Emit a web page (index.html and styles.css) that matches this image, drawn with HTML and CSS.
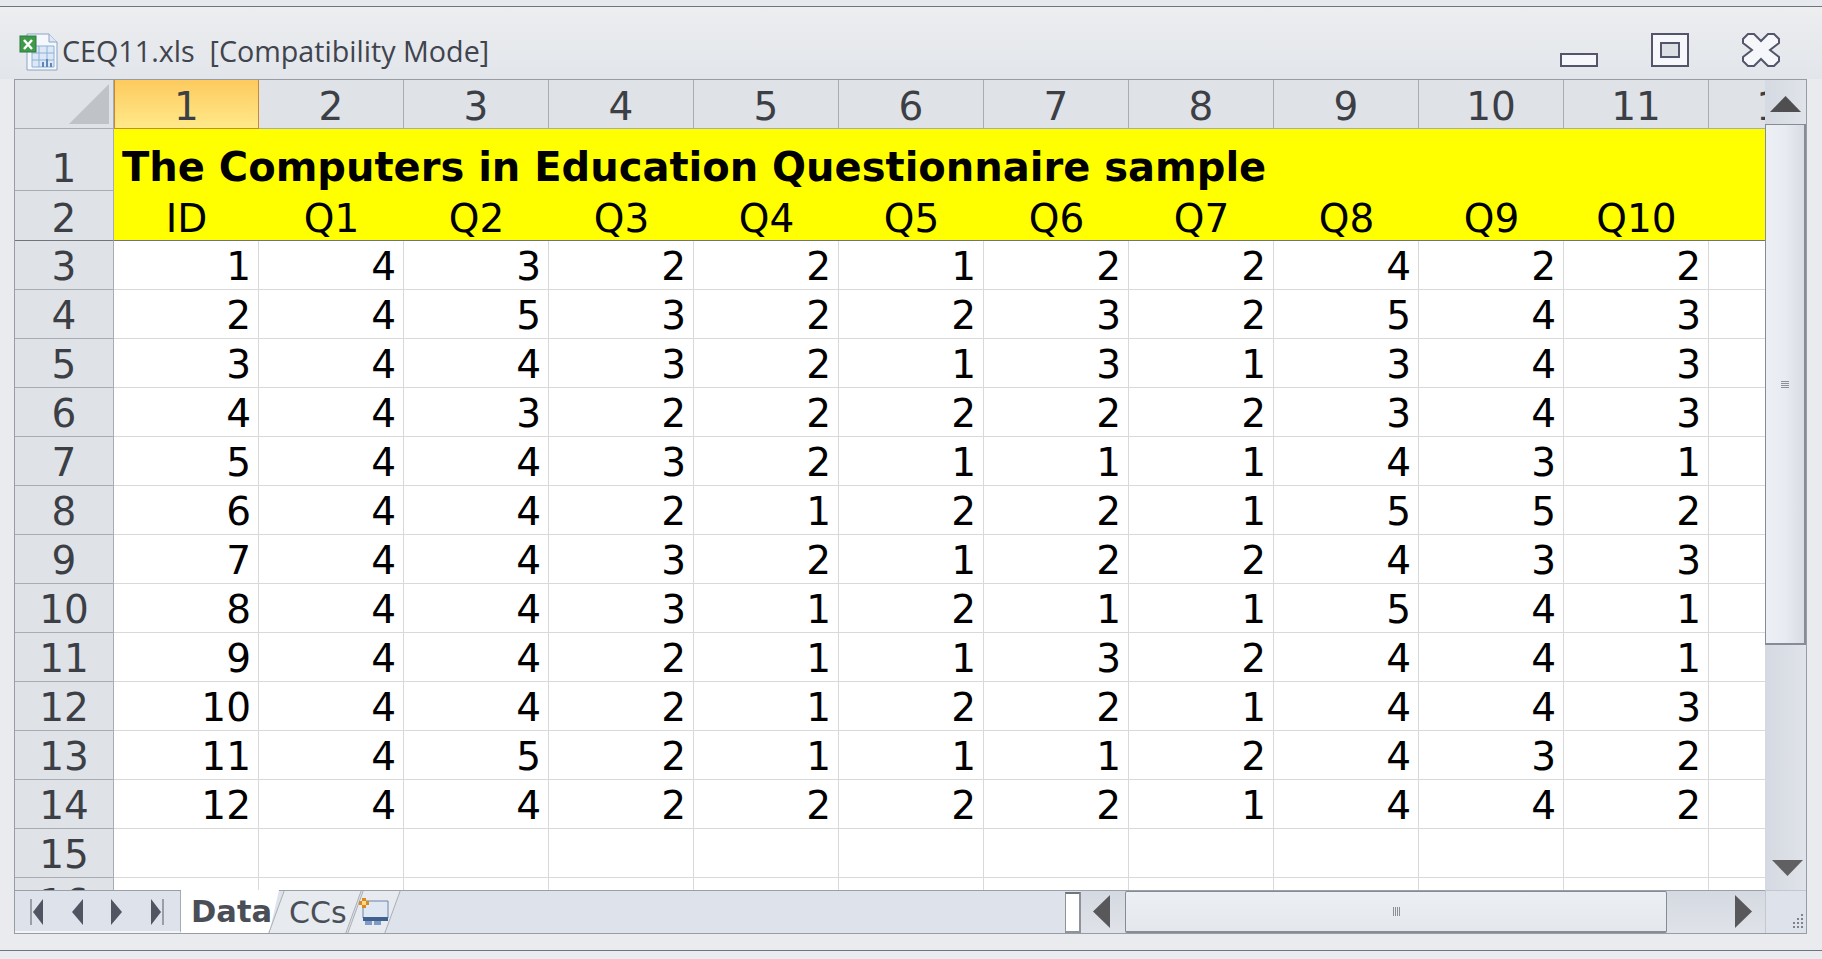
FILE: index.html
```html
<!DOCTYPE html>
<html lang="en">
<head>
    <meta charset="UTF-8">
    <title>CEQ11.xls [Compatibility Mode]</title>
    <link rel="stylesheet" href="styles.css">
</head>
<body>
    <div class="top-strip"></div>
    <div class="title-bar">
        <svg class="file-icon" width="40" height="38" viewBox="0 0 40 38">
            <path d="M8 1H30L38 9V37H8Z" fill="#f4f8fc" stroke="#8aa4c4"/>
            <path d="M30 1V9H38" fill="#dfe8f2" stroke="#8aa4c4"/>
            <path d="M13 13H35V34H13Z" fill="#dce8f6" stroke="#8fb0d6"/>
            <path d="M13 20H35M13 27H35M20 13V34M28 13V34" stroke="#8fb0d6"/>
            <path d="M24 34V29M28 34V26M32 34V30" stroke="#5f86b8" stroke-width="2"/>
            <rect x="1" y="3" width="16" height="16" fill="#3f9a4b" stroke="#2b7a38"/>
            <path d="M5 7L13 16M13 7L5 16" stroke="#fff" stroke-width="2.5"/>
        </svg>
        <span class="file-name">CEQ11.xls&nbsp; [Compatibility Mode]</span>
        <div class="window-buttons">
            <svg class="btn-min" width="38" height="14" viewBox="0 0 38 14"><rect x="1" y="1" width="36" height="12" fill="#f6f7fa" stroke="#53566a" stroke-width="2"/></svg>
            <svg class="btn-max" width="38" height="34" viewBox="0 0 38 34">
                <rect x="1" y="1" width="36" height="32" fill="#f6f7fa" stroke="#53566a" stroke-width="2"/>
                <rect x="10" y="10" width="18" height="14" fill="#dcdfe4" stroke="#53566a" stroke-width="2"/>
            </svg>
            <svg class="btn-close" width="38" height="34" viewBox="0 0 38 34">
                <path d="M6 1H12L19 8L26 1H32L37 6V10L28 17L37 24V28L32 33H26L19 26L12 33H6L1 28V24L10 17L1 10V6Z" fill="#f6f7fa" stroke="#53566a" stroke-width="2"/>
            </svg>
        </div>
    </div>

    <div class="sheet">
        <div class="sheet-main">
            <div class="grid-clip">
                <div class="grid">
                    <div class="corner"></div>
                    <div class="col-head selected">1</div><div class="col-head">2</div><div class="col-head">3</div><div class="col-head">4</div><div class="col-head">5</div><div class="col-head">6</div><div class="col-head">7</div><div class="col-head">8</div><div class="col-head">9</div><div class="col-head">10</div><div class="col-head">11</div><div class="col-head">12</div>

                    <div class="row-head row-tall">1</div>
                    <div class="title-cell">The Computers in Education Questionnaire sample</div>

                    <div class="row-head head-last">2</div>
                    <div class="label">ID</div><div class="label">Q1</div><div class="label">Q2</div><div class="label">Q3</div><div class="label">Q4</div><div class="label">Q5</div><div class="label">Q6</div><div class="label">Q7</div><div class="label">Q8</div><div class="label">Q9</div><div class="label">Q10</div><div class="label"></div>

                    <div class="row-head">3</div>
                    <div class="cell">1</div><div class="cell">4</div><div class="cell">3</div><div class="cell">2</div><div class="cell">2</div><div class="cell">1</div><div class="cell">2</div><div class="cell">2</div><div class="cell">4</div><div class="cell">2</div><div class="cell">2</div><div class="cell"></div>
                    <div class="row-head">4</div>
                    <div class="cell">2</div><div class="cell">4</div><div class="cell">5</div><div class="cell">3</div><div class="cell">2</div><div class="cell">2</div><div class="cell">3</div><div class="cell">2</div><div class="cell">5</div><div class="cell">4</div><div class="cell">3</div><div class="cell"></div>
                    <div class="row-head">5</div>
                    <div class="cell">3</div><div class="cell">4</div><div class="cell">4</div><div class="cell">3</div><div class="cell">2</div><div class="cell">1</div><div class="cell">3</div><div class="cell">1</div><div class="cell">3</div><div class="cell">4</div><div class="cell">3</div><div class="cell"></div>
                    <div class="row-head">6</div>
                    <div class="cell">4</div><div class="cell">4</div><div class="cell">3</div><div class="cell">2</div><div class="cell">2</div><div class="cell">2</div><div class="cell">2</div><div class="cell">2</div><div class="cell">3</div><div class="cell">4</div><div class="cell">3</div><div class="cell"></div>
                    <div class="row-head">7</div>
                    <div class="cell">5</div><div class="cell">4</div><div class="cell">4</div><div class="cell">3</div><div class="cell">2</div><div class="cell">1</div><div class="cell">1</div><div class="cell">1</div><div class="cell">4</div><div class="cell">3</div><div class="cell">1</div><div class="cell"></div>
                    <div class="row-head">8</div>
                    <div class="cell">6</div><div class="cell">4</div><div class="cell">4</div><div class="cell">2</div><div class="cell">1</div><div class="cell">2</div><div class="cell">2</div><div class="cell">1</div><div class="cell">5</div><div class="cell">5</div><div class="cell">2</div><div class="cell"></div>
                    <div class="row-head">9</div>
                    <div class="cell">7</div><div class="cell">4</div><div class="cell">4</div><div class="cell">3</div><div class="cell">2</div><div class="cell">1</div><div class="cell">2</div><div class="cell">2</div><div class="cell">4</div><div class="cell">3</div><div class="cell">3</div><div class="cell"></div>
                    <div class="row-head">10</div>
                    <div class="cell">8</div><div class="cell">4</div><div class="cell">4</div><div class="cell">3</div><div class="cell">1</div><div class="cell">2</div><div class="cell">1</div><div class="cell">1</div><div class="cell">5</div><div class="cell">4</div><div class="cell">1</div><div class="cell"></div>
                    <div class="row-head">11</div>
                    <div class="cell">9</div><div class="cell">4</div><div class="cell">4</div><div class="cell">2</div><div class="cell">1</div><div class="cell">1</div><div class="cell">3</div><div class="cell">2</div><div class="cell">4</div><div class="cell">4</div><div class="cell">1</div><div class="cell"></div>
                    <div class="row-head">12</div>
                    <div class="cell">10</div><div class="cell">4</div><div class="cell">4</div><div class="cell">2</div><div class="cell">1</div><div class="cell">2</div><div class="cell">2</div><div class="cell">1</div><div class="cell">4</div><div class="cell">4</div><div class="cell">3</div><div class="cell"></div>
                    <div class="row-head">13</div>
                    <div class="cell">11</div><div class="cell">4</div><div class="cell">5</div><div class="cell">2</div><div class="cell">1</div><div class="cell">1</div><div class="cell">1</div><div class="cell">2</div><div class="cell">4</div><div class="cell">3</div><div class="cell">2</div><div class="cell"></div>
                    <div class="row-head">14</div>
                    <div class="cell">12</div><div class="cell">4</div><div class="cell">4</div><div class="cell">2</div><div class="cell">2</div><div class="cell">2</div><div class="cell">2</div><div class="cell">1</div><div class="cell">4</div><div class="cell">4</div><div class="cell">2</div><div class="cell"></div>
                    <div class="row-head">15</div>
                    <div class="cell"></div><div class="cell"></div><div class="cell"></div><div class="cell"></div><div class="cell"></div><div class="cell"></div><div class="cell"></div><div class="cell"></div><div class="cell"></div><div class="cell"></div><div class="cell"></div><div class="cell"></div>
                    <div class="row-head">16</div>
                    <div class="cell"></div><div class="cell"></div><div class="cell"></div><div class="cell"></div><div class="cell"></div><div class="cell"></div><div class="cell"></div><div class="cell"></div><div class="cell"></div><div class="cell"></div><div class="cell"></div><div class="cell"></div>
                </div>
            </div>
            <div class="vscroll">
                <div class="v-btn">
                    <svg width="31" height="16" viewBox="0 0 31 16"><path d="M15.5 0L31 16H0Z" fill="#4f4f52"/></svg>
                </div>
                <div class="v-thumb"><span class="grip-h"></span></div>
                <div class="v-space"></div>
                <div class="v-btn v-down">
                    <svg width="31" height="16" viewBox="0 0 31 16"><path d="M0 0H31L15.5 16Z" fill="#606063"/></svg>
                </div>
            </div>
        </div>
        <div class="tab-bar">
            <div class="tab-nav">
                <svg width="14" height="26" viewBox="0 0 14 26"><path d="M1 0V26" stroke="#555a66"/><path d="M13 0V26L3 13Z" fill="#505562"/></svg>
                <svg width="11" height="26" viewBox="0 0 11 26"><path d="M11 0V26L0 13Z" fill="#505562"/></svg>
                <svg width="11" height="26" viewBox="0 0 11 26"><path d="M0 0V26L11 13Z" fill="#505562"/></svg>
                <svg width="14" height="26" viewBox="0 0 14 26"><path d="M13 0V26" stroke="#555a66"/><path d="M1 0V26L11 13Z" fill="#505562"/></svg>
            </div>
            <div class="tab tab-active">Data</div>
            <div class="tab tab-other">CCs</div>
            <div class="tab tab-new">
                <svg width="30" height="28" viewBox="0 0 30 28">
                    <path d="M4 3H29V20H4Z" fill="#dfe7f3" stroke="#6c83ac"/>
                    <path d="M4 19H29V23H4Z" fill="#40618f"/>
                    <path d="M6 23H13V27H6ZM15 23H22V27H15Z" fill="#7f9cc6"/>
                    <path d="M3 0H7V3H10V7H7V10H3V7H0V3H3Z" fill="#d98a1f"/>
                    <rect x="3" y="3" width="4" height="4" fill="#fbd88a"/>
                </svg>
            </div>
            <div class="tab-fill"></div>
            <div class="splitter"></div>
            <div class="hscroll">
                <div class="h-btn">
                    <svg width="17" height="33" viewBox="0 0 17 33"><path d="M17 0V33L0 16.5Z" fill="#58585b"/></svg>
                </div>
                <div class="h-thumb"><span class="grip-v"></span></div>
                <div class="h-btn h-right">
                    <svg width="17" height="33" viewBox="0 0 17 33"><path d="M0 0V33L17 16.5Z" fill="#58585b"/></svg>
                </div>
            </div>
            <div class="size-corner">
                <svg width="12" height="16" viewBox="0 0 12 16"><path d="M9 1h2v2H9zM9 5h2v2H9zM5 5h2v2H5zM9 9h2v2H9zM5 9h2v2H5zM1 9h2v2H1zM9 13h2v2H9zM5 13h2v2H5zM1 13h2v2H1z" fill="#7d828c"/></svg>
            </div>
        </div>
    </div>
    <div class="bottom-strip"></div>
</body>
</html>
```
FILE: styles.css
```css
body {
    margin: 0;
    height: 959px;
    overflow: hidden;
    background: #e9ebef;
    font-family: "DejaVu Sans", sans-serif;
    color: #000;
}
.top-strip {
    height: 6px;
    background: #e6e9ed;
    border-bottom: 1px solid #70747c;
}
.title-bar {
    height: 72px;
    padding: 0 42px 0 19px;
    display: flex;
    align-items: flex-end;
    background: linear-gradient(#eceef0, #e2e5ea);
}
.file-icon {
    margin-bottom: 8px;
}
.file-name {
    margin: 0 0 9px 3px;
    font-family: "Open Sans", sans-serif;
    font-size: 28.7px;
    line-height: 38px;
    color: #3f444e;
}
.window-buttons {
    margin-left: auto;
    display: flex;
    align-items: flex-end;
    gap: 53px;
    padding-bottom: 12px;
}
.sheet {
    width: 1791px;
    margin-left: 14px;
    border: 1px solid #979ca5;
    background: #dfe3e9;
}
.sheet-main {
    display: flex;
    height: 811px;
}
.grid-clip {
    width: 1750px;
    overflow: hidden;
    background: #fff;
}
.grid {
    display: grid;
    grid-template-columns: 99px repeat(12, 145px);
    grid-template-rows: 49px 62px 50px repeat(13, 49px);
    font-size: 39px;
}
.corner {
    background: #dfe2e7;
    border-right: 1px solid #a8adb5;
    border-bottom: 1px solid #a8adb5;
    display: flex;
    align-items: center;
    justify-content: flex-end;
    padding-right: 4px;
}
.corner::after {
    content: "";
    width: 40px;
    height: 40px;
    background: #bfc3c7;
    clip-path: polygon(100% 0, 100% 100%, 0 100%);
}
.col-head {
    background: #dfe2e7;
    border-right: 1px solid #a8adb5;
    border-bottom: 1px solid #a8adb5;
    color: #3c3f45;
    text-align: center;
    line-height: 54px;
    box-sizing: border-box;
    overflow: hidden;
}
.col-head.selected {
    background: linear-gradient(#fdca5e, #ffe98a);
    border-right-color: #c98a2b;
    border-bottom-color: #c98a2b;
    border-left: 1px solid #c98a2b;
}
.row-head {
    background: #dfe2e7;
    border-right: 1px solid #a8adb5;
    border-bottom: 1px solid #a8adb5;
    color: #3c3f45;
    text-align: center;
    line-height: 52px;
    height: 100%;
    box-sizing: border-box;
    overflow: hidden;
}
.row-head.row-tall {
    padding-top: 14px;
}
.row-head.head-last {
    border-bottom-color: #70747c;
    line-height: 55px;
}
.title-cell {
    grid-column: span 12;
    background: #ff0;
    font-size: 40px;
    font-weight: bold;
    padding: 13px 0 0 8px;
    line-height: 50px;
    white-space: nowrap;
}
.label {
    background: #ff0;
    border-bottom: 1px solid #70747c;
    text-align: center;
    line-height: 55px;
    height: 50px;
    box-sizing: border-box;
}
.cell {
    border-right: 1px solid #d9d9d9;
    border-bottom: 1px solid #d9d9d9;
    text-align: right;
    padding-right: 7px;
    line-height: 52px;
    overflow: hidden;
}
.vscroll {
    width: 41px;
    display: flex;
    flex-direction: column;
    background: linear-gradient(90deg, #d5d9e1, #e0e3e9);
}
.v-btn {
    height: 44px;
    display: flex;
    align-items: center;
    justify-content: center;
    padding-top: 3px;
    box-sizing: border-box;
}
.v-thumb {
    height: 521px;
    box-sizing: border-box;
    border: 1px solid #868b95;
    border-right-width: 2px;
    border-bottom-width: 2px;
    background: linear-gradient(90deg, #eceff4, #e8ebf1 50%, #d9dce4);
    display: flex;
    align-items: center;
    justify-content: center;
}
.grip-h {
    width: 8px;
    height: 7px;
    background: repeating-linear-gradient(#8c8f96 0 1px, transparent 1px 2px);
}
.v-space {
    flex: 1;
}
.v-down {
    height: 38px;
    padding: 0 0 15px 7px;
    align-items: flex-end;
    justify-content: flex-start;
}
.tab-bar {
    height: 42px;
    display: flex;
    background: #dee2ea;
    border-top: 1px solid #9a9fa8;
    margin-top: -1px;
    position: relative;
}
.tab-nav {
    width: 166px;
    box-sizing: border-box;
    padding: 8px 16px 0 15px;
    display: flex;
    justify-content: space-between;
    align-items: flex-start;
    border-right: 1px solid #a8adb5;
    border-bottom: 2px solid #f2f4f7;
}
.tab {
    position: relative;
    font-size: 30px;
    line-height: 44px;
    color: #4a4e57;
}
.tab-active {
    width: 98px;
    background: #fff;
    font-size: 30.5px;
    font-weight: bold;
    padding-left: 10px;
    box-sizing: border-box;
    margin-top: -1px;
    clip-path: polygon(0 0, 100% 0, 90% 100%, 0 100%);
}
.tab-other {
    width: 78px;
    padding-left: 13px;
    margin-left: -3px;
    box-sizing: border-box;
    isolation: isolate;
}
.tab-other::before, .tab-new::before {
    content: "";
    position: absolute;
    inset: 0 0 0 0;
    background: #e7eaef;
    border-left: 1px solid #a8adb5;
    border-right: 1px solid #a8adb5;
    transform: skewX(-20deg);
}
.tab-other::before {
    z-index: -1;
}
.tab-new {
    width: 38px;
    margin-left: 1px;
    display: flex;
    align-items: center;
    justify-content: center;
}
.tab-new svg {
    position: relative;
}
.tab-fill {
    flex: 1;
}
.splitter {
    width: 16px;
    box-sizing: border-box;
    border: 2px solid #8d929b;
    border-left-width: 1px;
    border-top-color: #6f747d;
    background: #fff;
    margin-top: 1px;
}
.hscroll {
    width: 684px;
    display: flex;
    background: linear-gradient(#d5d9e1, #dfe2e8);
}
.h-btn {
    width: 44px;
    padding: 4px 0 0 12px;
    box-sizing: border-box;
}
.h-thumb {
    width: 542px;
    box-sizing: border-box;
    border: 1px solid #868b95;
    border-bottom-width: 2px;
    border-radius: 2px;
    background: linear-gradient(#eceff4, #e4e7ec);
    display: flex;
    align-items: center;
    justify-content: center;
}
.grip-v {
    width: 7px;
    height: 9px;
    background: repeating-linear-gradient(90deg, #8c8f96 0 1px, transparent 1px 2px);
}
.h-right {
    flex: 1;
    padding: 4px 0 0 68px;
}
.size-corner {
    width: 41px;
    box-sizing: border-box;
    padding: 22px 0 0 26px;
    border-left: 1px solid #c3c7cf;
    border-top: 1px solid #c3c7cf;
    margin-top: -1px;
}
.bottom-strip {
    height: 15px;
    margin-top: 16px;
    background: #e8ebef;
    border-top: 1px solid #70747c;
}
```
